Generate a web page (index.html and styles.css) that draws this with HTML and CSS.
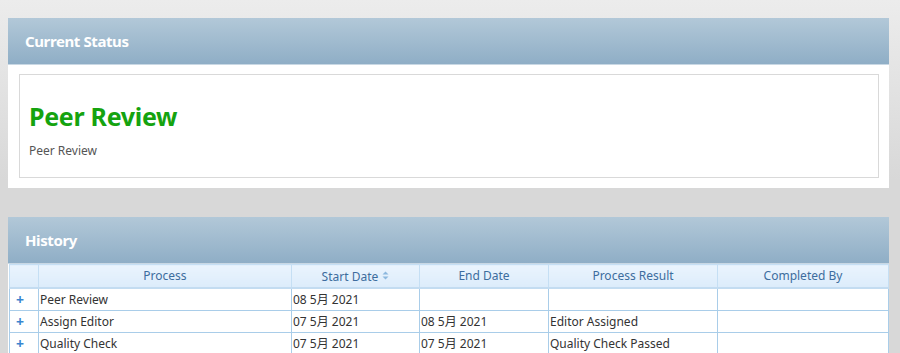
FILE: index.html
```html
<!DOCTYPE html>
<html lang="en">
<head>
  <meta charset="UTF-8">
  <title>Status</title>
  <link rel="stylesheet" href="styles.css">
</head>
<body>
  <div class="panel">
    <div class="panel-header">Current Status</div>
    <div class="panel-body">
      <div class="status-box">
        <h1 class="status-title">Peer Review</h1>
        <p class="status-text">Peer Review</p>
      </div>
    </div>
  </div>

  <div class="panel history">
    <div class="panel-header">History</div>
    <table class="grid">
      <colgroup>
        <col class="c-exp"><col class="c-proc"><col class="c-start"><col class="c-end"><col class="c-result"><col class="c-by">
      </colgroup>
      <thead>
        <tr>
          <th></th>
          <th>Process</th>
          <th>Start Date <span class="sort"><svg width="7" height="9" viewBox="0 0 7 9"><path d="M0.5 3.5 L3.5 0.5 L6.5 3.5 Z" fill="#8cb8de"/><path d="M0.5 5.5 L3.5 8.5 L6.5 5.5 Z" fill="#8cb8de"/></svg></span></th>
          <th>End Date</th>
          <th>Process Result</th>
          <th>Completed By</th>
        </tr>
      </thead>
      <tbody>
        <tr>
          <td class="exp">+</td>
          <td>Peer Review</td>
          <td>08 5月 2021</td>
          <td></td>
          <td></td>
          <td></td>
        </tr>
        <tr>
          <td class="exp">+</td>
          <td>Assign Editor</td>
          <td>07 5月 2021</td>
          <td>08 5月 2021</td>
          <td>Editor Assigned</td>
          <td></td>
        </tr>
        <tr>
          <td class="exp">+</td>
          <td>Quality Check</td>
          <td>07 5月 2021</td>
          <td>07 5月 2021</td>
          <td>Quality Check Passed</td>
          <td></td>
        </tr>
      </tbody>
    </table>
  </div>
</body>
</html>
```

FILE: styles.css
```css
body {
  margin: 0;
  padding: 18px 11px 0 8px;
  font-family: "Noto Sans", "Noto Sans CJK SC", sans-serif;
  background: linear-gradient(to bottom, #ececec, #d8d8d8 180px, #d8d8d8);
  min-height: 100vh;
  box-sizing: border-box;
  overflow: hidden;
}

.panel {
  width: 881px;
  background: #fff;
}

.panel-header {
  height: 47px;
  line-height: 47px;
  padding-left: 17px;
  background: linear-gradient(to bottom, #b2c8d8, #8faec6);
  color: #fff;
  font-size: 15px;
  font-weight: bold;
  letter-spacing: -0.4px;
  border-bottom: 1px solid #c9d8e4;
  box-sizing: border-box;
}

.panel-body {
  padding: 9px 10px 10px 11px;
}

.status-box {
  border: 1px solid #d9d9d9;
  height: 104px;
  box-sizing: border-box;
  padding: 26px 9px 0;
}

.status-title {
  margin: 0;
  color: #15a30f;
  font-size: 25px;
  font-weight: bold;
  letter-spacing: -0.3px;
  line-height: 30px;
}

.status-text {
  margin: 11px 0 0;
  color: #555;
  font-size: 12px;
}

.history {
  margin-top: 29px;
  padding: 0 1px 0 1px;
  box-sizing: border-box;
  background: #fff;
}

.history .panel-header {
  margin: 0 -1px;
}

.grid {
  width: 879px;
  border-collapse: collapse;
  table-layout: fixed;
  font-size: 12px;
}

.c-exp { width: 29px; }
.c-proc { width: 253px; }
.c-start { width: 128px; }
.c-end { width: 129px; }
.c-result { width: 169px; }
.c-by { width: 171px; }

.grid th {
  height: 22px;
  line-height: 18px;
  padding: 0;
  background: linear-gradient(to bottom, #eaf4fd, #dcecfb);
  color: #3d6d9e;
  font-weight: normal;
  border: 1px solid #c5dff4;
  border-bottom: 2px solid #c3dcf1;
}

.sort {
  display: inline-block;
  vertical-align: 1px;
  margin-left: 1px;
}

.grid td {
  height: 21px;
  line-height: 17px;
  padding: 0 1px;
  color: #333;
  border: 1px solid #a9cde9;
  white-space: nowrap;
}

.grid td.exp {
  text-align: left;
  padding: 0 0 0 6px;
  line-height: 16px;
  color: #3a86cf;
  font-weight: bold;
  font-size: 14px;
}
```
